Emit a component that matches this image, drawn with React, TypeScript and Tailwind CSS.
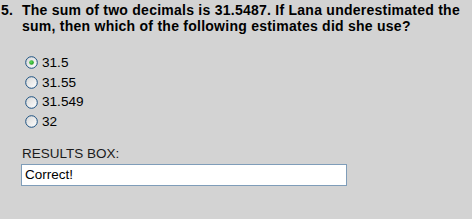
import React from "react";

const options = ["31.5", "31.55", "31.549", "32"];

function Radio({ checked }: { checked: boolean }) {
  return (
    <svg width="13" height="13" viewBox="0 0 13 13" className="shrink-0">
      <defs>
        <linearGradient id="rg" x1="0" y1="0" x2="1" y2="1">
          <stop offset="0" stopColor="#d6d6d6" />
          <stop offset="1" stopColor="#ffffff" />
        </linearGradient>
        <radialGradient id="dot" cx="0.4" cy="0.4" r="0.6">
          <stop offset="0" stopColor="#62e062" />
          <stop offset="1" stopColor="#1f9a1f" />
        </radialGradient>
      </defs>
      <circle cx="6.5" cy="6.5" r="5.8" fill="url(#rg)" stroke="#1c5180" strokeWidth="1" />
      {checked && <circle cx="6.5" cy="6.5" r="2.3" fill="url(#dot)" />}
    </svg>
  );
}

export default function App() {
  return (
    <div className="h-[219px] w-[472px] bg-[#d3d3d3] font-['Liberation_Sans',Arial,sans-serif] text-black">
      <div className="flex pt-[2px] text-[14px] font-bold leading-[16px] tracking-[0.25px]">
        <span className="w-[22px] pl-[1px]">5.</span>
        <p className="w-[448px]">
          The sum of two decimals is 31.5487. If Lana underestimated the sum, then which of the following
          estimates did she use?
        </p>
      </div>

      <div className="mt-[19px] flex flex-col pl-[25px] text-[13.6px] leading-[19.7px]">
        {options.map((o, i) => (
          <label key={o} className="flex items-center gap-[4px]">
            <Radio checked={i === 0} />
            <span>{o}</span>
          </label>
        ))}
      </div>

      <div className="mt-[14px] pl-[22px] text-[13.5px] leading-[15px] text-[#1a1a1a]">RESULTS BOX:</div>
      <div className="mt-[3px] pl-[21px]">
        <div className="flex h-[22px] w-[326px] items-center border border-[#7f9db9] bg-white px-[3px] text-[13.5px]">
          Correct!
        </div>
      </div>
    </div>
  );
}
